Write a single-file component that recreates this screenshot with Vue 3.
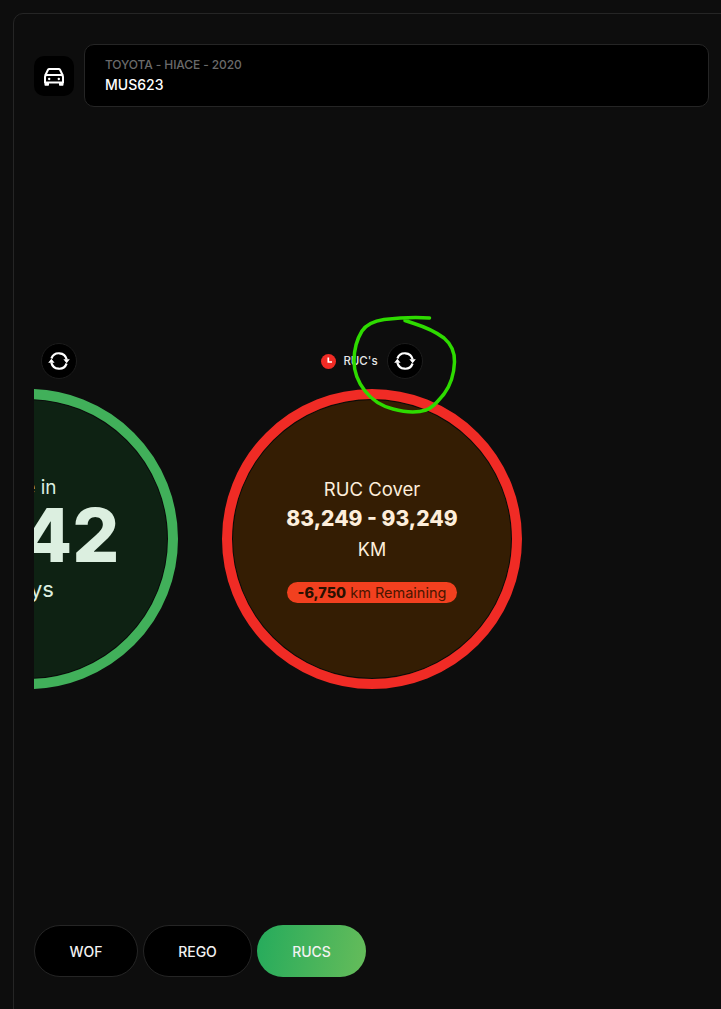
<template>
  <div class="page">
    <section class="panel">
      <header class="vehicle">
        <div class="vehicle-icon">
          <svg width="24" height="24" viewBox="0 0 24 24" fill="none">
            <path d="M3.200 11.500 6 5.800C6.300 5.200 6.800 5 7.400 5h9.200c.6 0 1.100.2 1.400.8l2.800 5.700" stroke="#fff" stroke-width="2" />
            <path d="M3 18.500v-5.500c0-1.100.7-2 2-2h14c1.300 0 2 .9 2 2v5.500Z" stroke="#fff" stroke-width="2" stroke-linejoin="round" />
            <path d="M2.500 18h4.500v2.800c0 .6-.4 1-1 1H3.500c-.6 0-1-.4-1-1ZM17 18h4.500v2.800c0 .6-.4 1-1 1H18c-.6 0-1-.4-1-1Z" fill="#fff" />
            <rect x="6" y="13.800" width="2.400" height="2.400" rx="1.100" fill="#fff" />
            <rect x="15.600" y="13.800" width="2.400" height="2.400" rx="1.100" fill="#fff" />
          </svg>
        </div>
        <div class="vehicle-info">
          <div class="vehicle-name">TOYOTA - HIACE - 2020</div>
          <div class="vehicle-plate">MUS623</div>
        </div>
      </header>

      <div class="carousel">
        <div class="track">
          <div v-for="slide in slides" :key="slide.label" class="slide">
            <div class="slide-top">
              <span class="clock" :class="slide.tone">
                <svg width="15" height="15" viewBox="0 0 15 15">
                  <path d="M7.300 3.500v4.500h3.700" fill="none" stroke="#fff" stroke-width="1.700" />
                </svg>
              </span>
              <span class="slide-label">{{ slide.label }}</span>
              <button class="refresh" type="button" aria-label="Refresh">
                <svg width="22" height="22" viewBox="0 0 22 22" fill="none">
                  <path d="M3.400 8.500A8 8 0 0 1 18.700 9.500" stroke="#fff" stroke-width="2.200" />
                  <path d="M18.600 13.500A8 8 0 0 1 3.300 12.500" stroke="#fff" stroke-width="2.200" />
                  <path d="M15.400 9.200h6.400l-3.200 4ZM0.200 12.800h6.400l-3.200-4Z" fill="#fff" />
                </svg>
              </button>
            </div>
            <div class="circle" :class="slide.tone">
              <template v-if="slide.tone === 'green'">
                <div class="due-top">Due in</div>
                <div class="due-value">1,142</div>
                <div class="due-bottom">Days</div>
              </template>
              <template v-else>
                <div class="cover-title">RUC Cover</div>
                <div class="cover-range">83,249 - 93,249</div>
                <div class="cover-unit">KM</div>
                <div class="cover-pill"><b>-6,750</b> km Remaining</div>
              </template>
            </div>
          </div>
        </div>
      </div>

      <nav class="tabs">
        <button v-for="tab in tabs" :key="tab" class="tab" :class="{ active: tab === active }" type="button">
          {{ tab }}
        </button>
      </nav>
    </section>

    <svg class="scribble" width="120" height="110" viewBox="345 310 120 110" fill="none">
      <path d="M429.500 318C415 317 397 318 384 319.500C374 321 366 325 362 331C357 339 354 350 354 361C354 373 358 382 365 391C372 400 381 406 393 409C404 412 417 413 426 410C433 408 438 401 444 394C450 386 454 375 454.500 362C455 351 451 344 444 338C436 332 425 327 414 323.500L405 320.500" stroke="#2edb00" stroke-width="3.500" stroke-linecap="round" stroke-linejoin="round" />
    </svg>
  </div>
</template>

<script setup>
import { ref } from "vue";

const slides = [
  { label: "WOF", tone: "green" },
  { label: "RUC's", tone: "red" },
];

const tabs = ["WOF", "REGO", "RUCS"];
const active = ref("RUCS");
</script>

<style>
html,
body {
  background: #0d0d0d;
}
</style>

<style scoped>
.page {
  position: relative;
  width: 721px;
  height: 1009px;
  overflow: hidden;
  padding: 13px 0 0 13px;
  box-sizing: border-box;
  background: #0d0d0d;
  font-family: "Inter", "Liberation Sans", sans-serif;
  color: #fff;
}

.panel {
  width: 740px;
  height: 1040px;
  box-sizing: border-box;
  border: 1px solid #252525;
  border-radius: 10px;
  padding: 30px 0 0 20px;
}

.vehicle {
  display: flex;
  align-items: center;
  gap: 10px;
  width: 675px;
}

.vehicle-icon {
  display: flex;
  align-items: center;
  justify-content: center;
  width: 40px;
  height: 40px;
  margin-top: 1px;
  border-radius: 10px;
  background: #000;
}

.vehicle-info {
  flex: 1;
  height: 63px;
  box-sizing: border-box;
  padding: 12px 20px 0;
  border: 1px solid #252525;
  border-radius: 10px;
  background: #000;
}

.vehicle-name {
  font-size: 12px;
  line-height: 16px;
  font-weight: 500;
  letter-spacing: -0.1px;
  color: #6a6a6a;
}

.vehicle-plate {
  margin-top: 3px;
  font-size: 14px;
  line-height: 18px;
  font-weight: 500;
}

.carousel {
  width: 670px;
  margin-top: 236px;
  overflow: hidden;
}

.track {
  display: flex;
  gap: 44px;
  margin-left: -156px;
}

.slide {
  flex: none;
  width: 300px;
}

.slide-top {
  display: flex;
  align-items: center;
  justify-content: center;
  height: 36px;
  margin-bottom: 10px;
}

.clock {
  display: flex;
  width: 15px;
  height: 15px;
  margin-right: 7px;
  border-radius: 50%;
}

.clock.red {
  background: #f02b25;
}

.clock.green {
  background: #41b05a;
}

.slide-label {
  min-width: 31px;
  margin-right: 9px;
  font-size: 11.500px;
  font-weight: 500;
  color: #e6e6e6;
}

.refresh {
  display: flex;
  align-items: center;
  justify-content: center;
  width: 36px;
  height: 36px;
  padding: 0;
  border: 1px solid #1c1c1c;
  border-radius: 50%;
  background: #000;
}

.circle {
  display: flex;
  flex-direction: column;
  align-items: center;
  justify-content: center;
  width: 300px;
  height: 300px;
  box-sizing: border-box;
  border: 10px solid;
  border-radius: 50%;
  box-shadow: inset 0 0 0 1px #0a0a0a;
}

.circle.green {
  padding-bottom: 1px;
  border-color: #41b05a;
  background: #0e2213;
  color: #dcefe0;
}

.circle.red {
  border-color: #f02b25;
  background: #341d03;
  color: #fdeedb;
}

.due-top {
  font-size: 19px;
  line-height: 30px;
}

.due-value {
  font-size: 74px;
  line-height: 64px;
  font-weight: 800;
  white-space: nowrap;
}

.due-bottom {
  margin-top: 7px;
  font-size: 22px;
  line-height: 30px;
}

.cover-title {
  margin-bottom: 1px;
  font-size: 18.500px;
  line-height: 26px;
}

.cover-range {
  font-size: 21px;
  line-height: 32px;
  font-weight: 800;
  white-space: nowrap;
}

.cover-unit {
  margin-top: 2px;
  font-size: 18px;
  line-height: 26px;
}

.cover-pill {
  margin-top: 19px;
  padding: 0 11px;
  height: 21px;
  line-height: 21px;
  font-size: 14.500px;
  border-radius: 11px;
  background: #f2401f;
  color: #4a1600;
  white-space: nowrap;
}

.cover-pill b {
  font-weight: 800;
  color: #2a1000;
}

.tabs {
  display: flex;
  gap: 5px;
  margin-top: 236px;
}

.tab {
  width: 104px;
  height: 52px;
  border: 1px solid #252525;
  border-radius: 26px;
  background: #000;
  color: #f2f2f2;
  font-family: inherit;
  font-size: 14px;
  font-weight: 500;
}

.tab:nth-child(2) {
  width: 109px;
}

.tab.active {
  width: 109px;
  border: 0;
  background: linear-gradient(100deg, #25ab5c, #66bc5a);
}

.scribble {
  position: absolute;
  left: 345px;
  top: 310px;
}
</style>
